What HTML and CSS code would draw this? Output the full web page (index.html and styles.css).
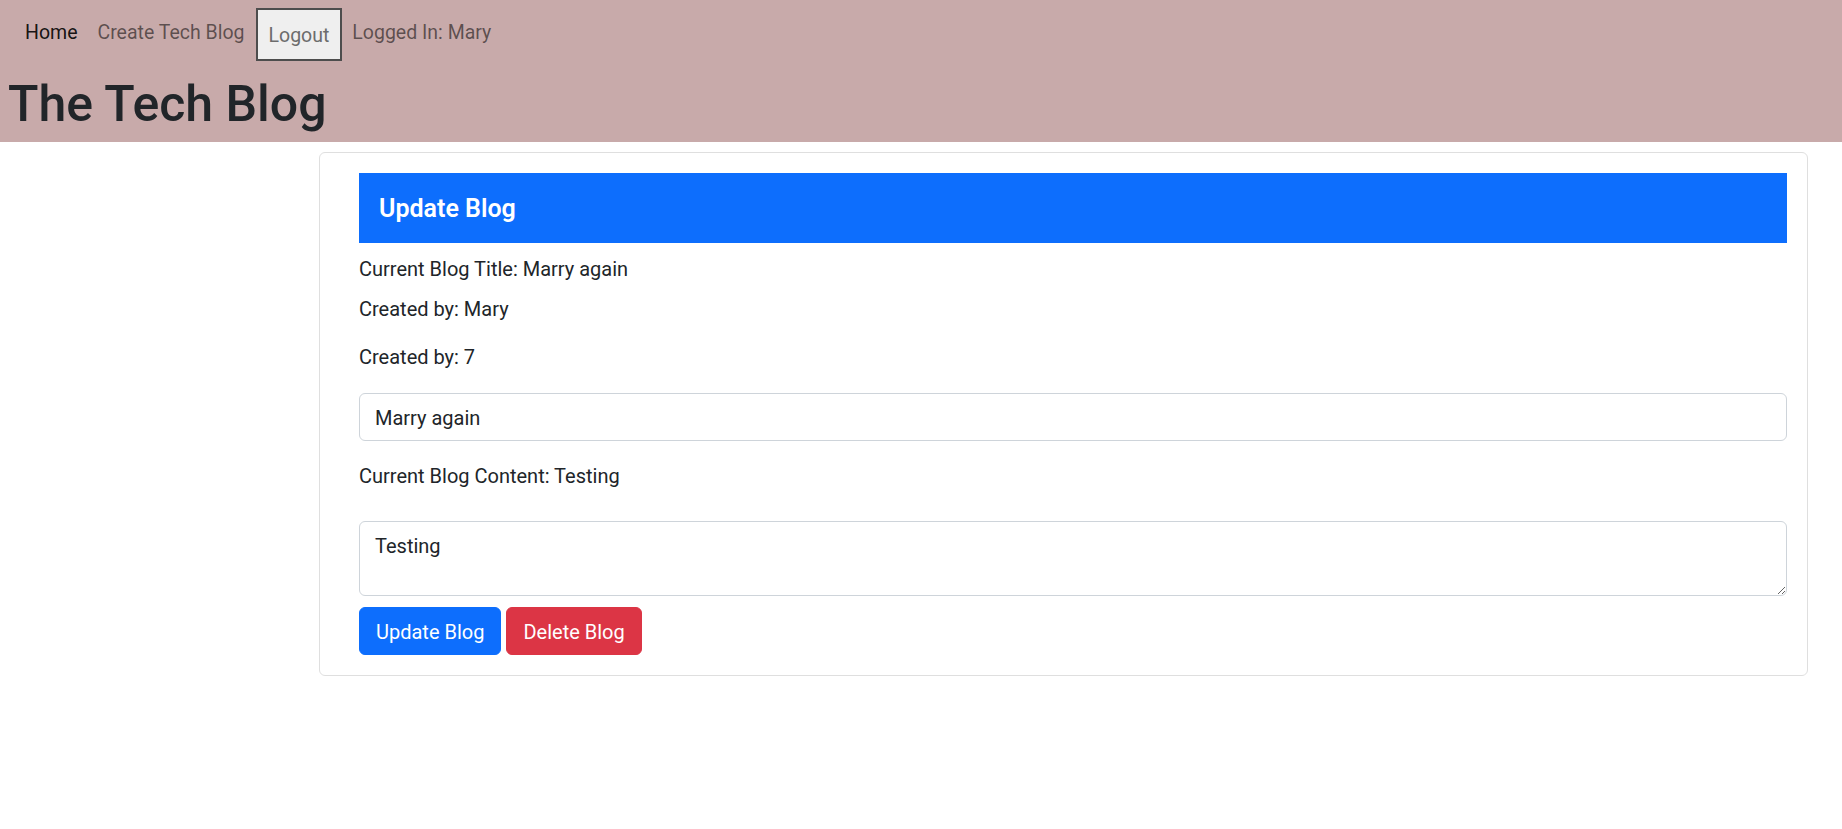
FILE: index.html
```html
<!DOCTYPE html>
<html lang="en">
<head>
<meta charset="utf-8">
<title>The Tech Blog</title>
<link rel="stylesheet" href="styles.css">
</head>
<body>
<header class="site-header">
  <nav class="nav">
    <a class="nav-link nav-link-active" href="#">Home</a>
    <a class="nav-link" href="#">Create Tech Blog</a>
    <button class="logout-btn" type="button">Logout</button>
    <span class="nav-link">Logged In: Mary</span>
  </nav>
  <h1 class="site-title">The Tech Blog</h1>
</header>
<main class="main">
  <section class="card">
    <h5 class="card-title">Update Blog</h5>
    <p class="info info-first">Current Blog Title: Marry again</p>
    <p class="info info-second">Created by: Mary</p>
    <p class="info info-third">Created by: 7</p>
    <input class="form-control" type="text" value="Marry again">
    <p class="info info-content">Current Blog Content: Testing</p>
    <textarea class="form-control form-textarea">Testing</textarea>
    <div class="actions">
      <button class="btn btn-primary" type="button">Update Blog</button>
      <button class="btn btn-danger" type="button">Delete Blog</button>
    </div>
  </section>
</main>
</body>
</html>
```
FILE: styles.css
```css
* { box-sizing: border-box; }

html, body {
  margin: 0;
  padding: 0;
  background: #ffffff;
}

body {
  font-family: Roboto, "Noto Sans", "Liberation Sans", sans-serif;
  font-size: 20px;
  line-height: 30px;
  color: #212529;
}

.site-header {
  background: #c8aaaa;
  padding: 8px 8px 8px 8px;
}

.nav {
  display: flex;
  align-items: flex-start;
  padding-left: 7px;
}

.nav-link {
  display: block;
  padding: 10px 10px;
  line-height: 30px;
  font-size: 19.5px;
  color: rgba(0, 0, 0, 0.55);
  text-decoration: none;
}

.nav-link-active {
  color: rgba(0, 0, 0, 0.9);
}

.logout-btn {
  display: block;
  height: 53px;
  margin-left: 1px;
  font-family: inherit;
  font-size: 19.5px;
  line-height: 30px;
  padding: 11px 11px 8px 11px;
  background: #efefef;
  color: #6c6c6c;
  border: 2px solid #4d4d4d;
  border-radius: 0;
}

.site-title {
  margin: 13px 0 0 0;
  font-size: 50px;
  line-height: 60px;
  font-weight: 500;
  color: #212529;
}

.main {
  padding-top: 10px;
}

.card {
  margin: 0 34px 0 319px;
  border: 1px solid #dfdfdf;
  border-radius: 6px;
  padding: 20px 20px 20px 39px;
}

.card-title {
  margin: 0;
  background: #0d6efd;
  color: #ffffff;
  font-size: 25px;
  line-height: 30px;
  font-weight: 600;
  padding: 21px 20px 19px 20px;
}

.info {
  margin: 0;
  padding-top: 1px;
}

.info-first { margin-top: 10px; }
.info-second { margin-top: 9px; }
.info-third { margin-top: 17px; }
.info-content { margin-top: 19px; }

.form-control {
  display: block;
  width: 100%;
  font-family: inherit;
  font-size: 20px;
  line-height: 30px;
  color: #212529;
  padding: 9px 15px 7px 15px;
  border: 1px solid #ced4da;
  border-radius: 6px;
  background: #ffffff;
  margin-top: 21px;
}

.form-textarea {
  height: 75px;
  margin-top: 30px;
  resize: vertical;
}

.actions {
  display: flex;
  gap: 5px;
  margin-top: 11px;
}

.btn {
  font-family: inherit;
  font-size: 20px;
  line-height: 30px;
  padding: 9px 16px 7px 16px;
  border: 1px solid transparent;
  border-radius: 6px;
  color: #ffffff;
}

.btn-primary {
  background: #0d6efd;
  border-color: #0d6efd;
}

.btn-danger {
  background: #dc3545;
  border-color: #dc3545;
}
```
